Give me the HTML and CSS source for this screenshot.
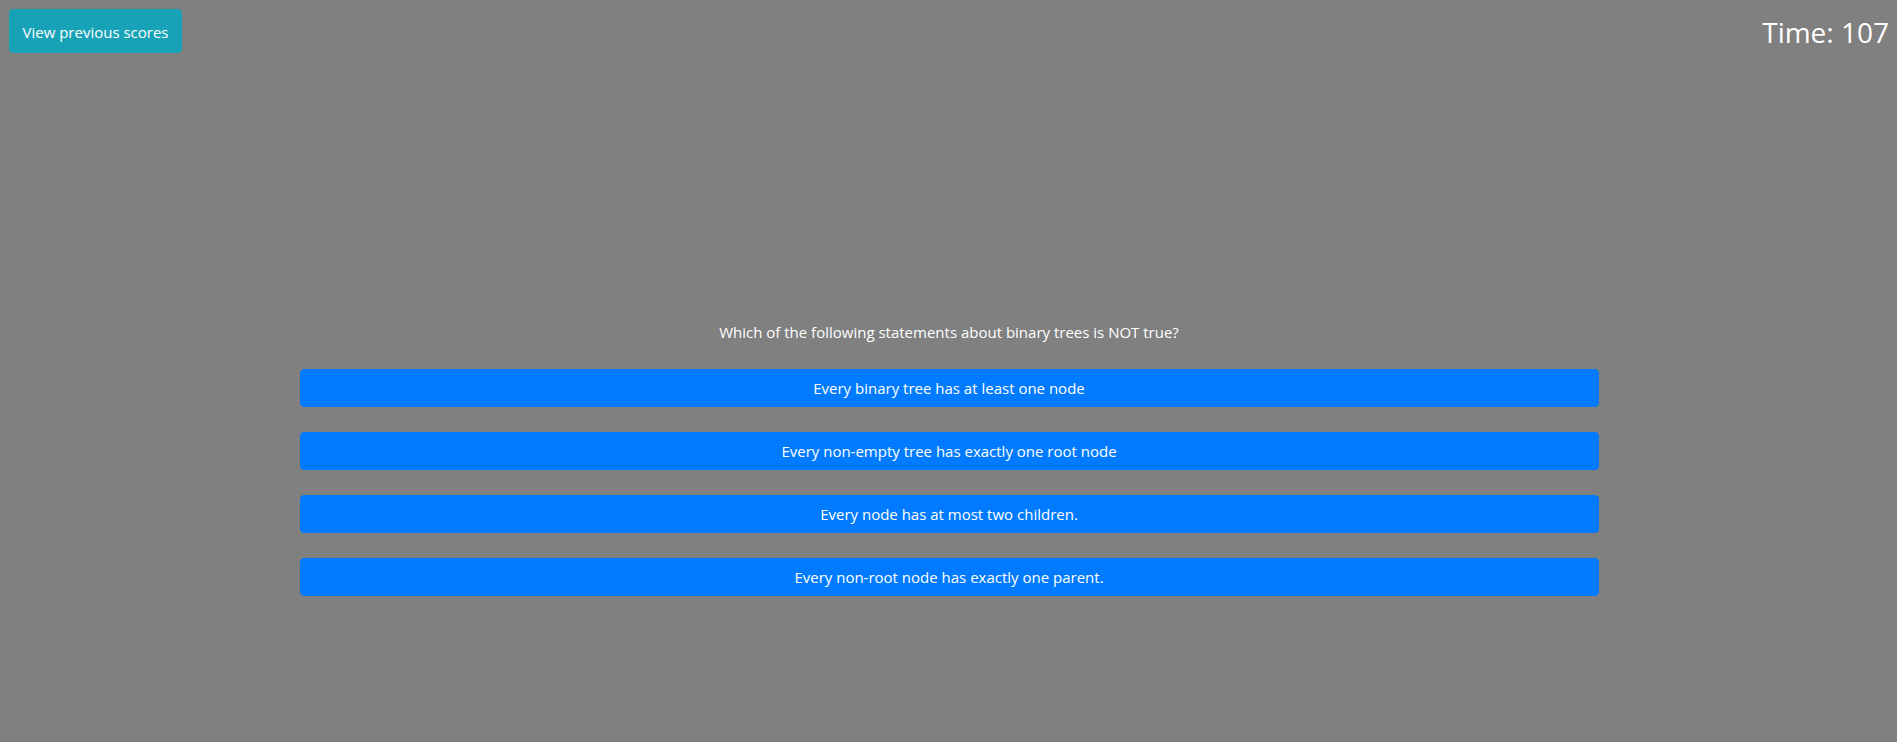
FILE: index.html
```html
<!DOCTYPE html>
<html lang="en">
<head>
<meta charset="utf-8">
<title>Quiz</title>
<link rel="stylesheet" href="styles.css">
</head>
<body>
<header class="topbar">
  <button class="btn btn-scores">View previous scores</button>
  <div class="timer">Time: 107</div>
</header>
<main class="quiz">
  <p class="question">Which of the following statements about binary trees is NOT true?</p>
  <div class="answers">
    <button class="btn btn-answer">Every binary tree has at least one node</button>
    <button class="btn btn-answer">Every non-empty tree has exactly one root node</button>
    <button class="btn btn-answer">Every node has at most two children.</button>
    <button class="btn btn-answer">Every non-root node has exactly one parent.</button>
  </div>
</main>
</body>
</html>
```
FILE: styles.css
```css
* { box-sizing: border-box; }
html, body { margin: 0; padding: 0; }
body {
  background: #808080;
  color: #fff;
  font-family: "Open Sans", "Noto Sans", sans-serif;
  font-size: 16px;
  line-height: 1.5;
  height: 742px;
}
.topbar {
  display: flex;
  justify-content: space-between;
  align-items: flex-start;
  padding: 9px 8px 0 9px;
}
.btn {
  font-family: inherit;
  font-size: 15px;
  line-height: 24px;
  color: #fff;
  border: 1px solid transparent;
  border-radius: 4px;
  cursor: pointer;
  text-align: center;
}
.btn-scores {
  background: #17a2b8;
  border-color: #17a2b8;
  width: 173px;
  height: 44px;
  padding: 10px 10px 8px;
}
.timer {
  font-size: 28px;
  line-height: 36px;
  padding-top: 5px;
}
.quiz {
  width: 1300px;
  margin: 0 auto;
  padding-top: 267px;
  padding-left: 1px;
}
.question {
  margin: 0 0 25px;
  text-align: center;
  font-size: 15px;
  line-height: 24px;
}
.answers {
  display: flex;
  flex-direction: column;
  gap: 25px;
}
.btn-answer {
  display: block;
  width: 100%;
  height: 38px;
  padding: 6px 12px;
  background: #007bff;
  border-color: #007bff;
}
```
